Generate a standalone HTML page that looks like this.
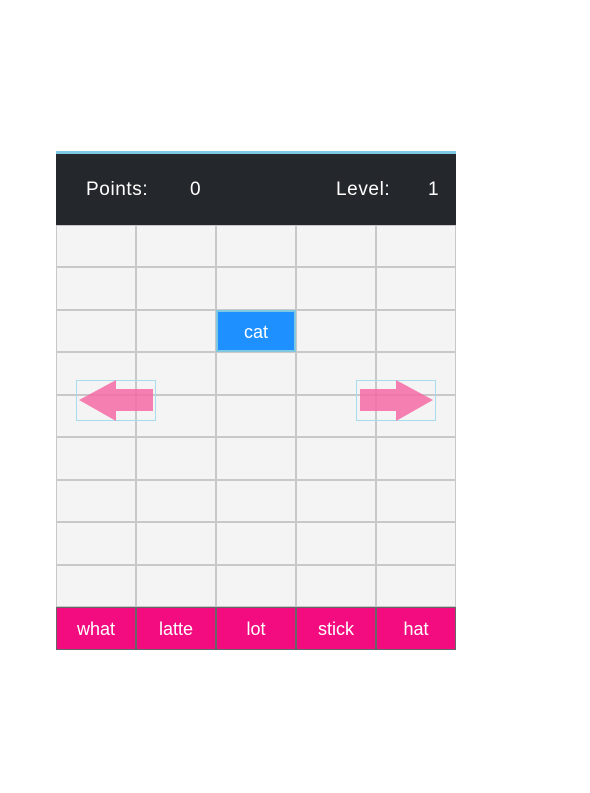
<!DOCTYPE html>
<html><head><style>
body{margin:0;width:590px;height:793px;background:#fff;position:relative;overflow:hidden;font-family:"Liberation Sans",sans-serif}
.top{position:absolute;left:56px;top:151px;width:400px;height:3px;background:#7ec8e3}
.hdr{position:absolute;left:56px;top:154px;width:400px;height:71px;background:#24272b;color:#fff;font-size:19px;letter-spacing:0.6px}
.hdr span{position:absolute;top:25px}
.c{position:absolute;box-sizing:border-box;background:#f4f4f4;border:1px solid #c8c8c8}
.w{position:absolute;box-sizing:border-box;background:#f20c7f;border:1px solid #666;color:#fff;font-size:18px;text-align:center;line-height:43px}
.cat{position:absolute;left:216px;top:310px;width:80px;height:42px;box-sizing:border-box;background:#1e90ff;border:2px solid #7ec8e3;color:#fff;font-size:18px;text-align:center;line-height:40px}
.ab{position:absolute;width:80px;height:41px;box-sizing:border-box;border:1px solid #a8dbec}
</style></head><body>
<div class="top"></div>
<div class="hdr"><span style="left:30px">Points:</span><span style="left:134px">0</span><span style="left:280px">Level:</span><span style="left:372px">1</span></div>
<div id="g"></div>
<script>
var ys=[225,267,310,352,395,437,480,522,565,607];var h='';
for(var r=0;r<9;r++)for(var c=0;c<5;c++)h+='<div class="c" style="left:'+(56+c*80)+'px;top:'+ys[r]+'px;width:80px;height:'+(ys[r+1]-ys[r])+'px"></div>';
var wd=['what','latte','lot','stick','hat'];
for(var c=0;c<5;c++)h+='<div class="w" style="left:'+(56+c*80)+'px;top:607px;width:80px;height:43px">'+wd[c]+'</div>';
document.getElementById('g').innerHTML=h;
</script>
<div class="cat">cat</div>
<div class="ab" style="left:76px;top:380px"></div>
<div class="ab" style="left:356px;top:380px"></div>
<svg width="590" height="793" style="position:absolute;left:0;top:0">
<polygon points="79,400 116,380 116,389 153,389 153,411 116,411 116,421" fill="#f46aa5" opacity="0.85"/>
<polygon points="433,400 396,380 396,389 360,389 360,411 396,411 396,421" fill="#f46aa5" opacity="0.85"/>
</svg>
</body></html>
